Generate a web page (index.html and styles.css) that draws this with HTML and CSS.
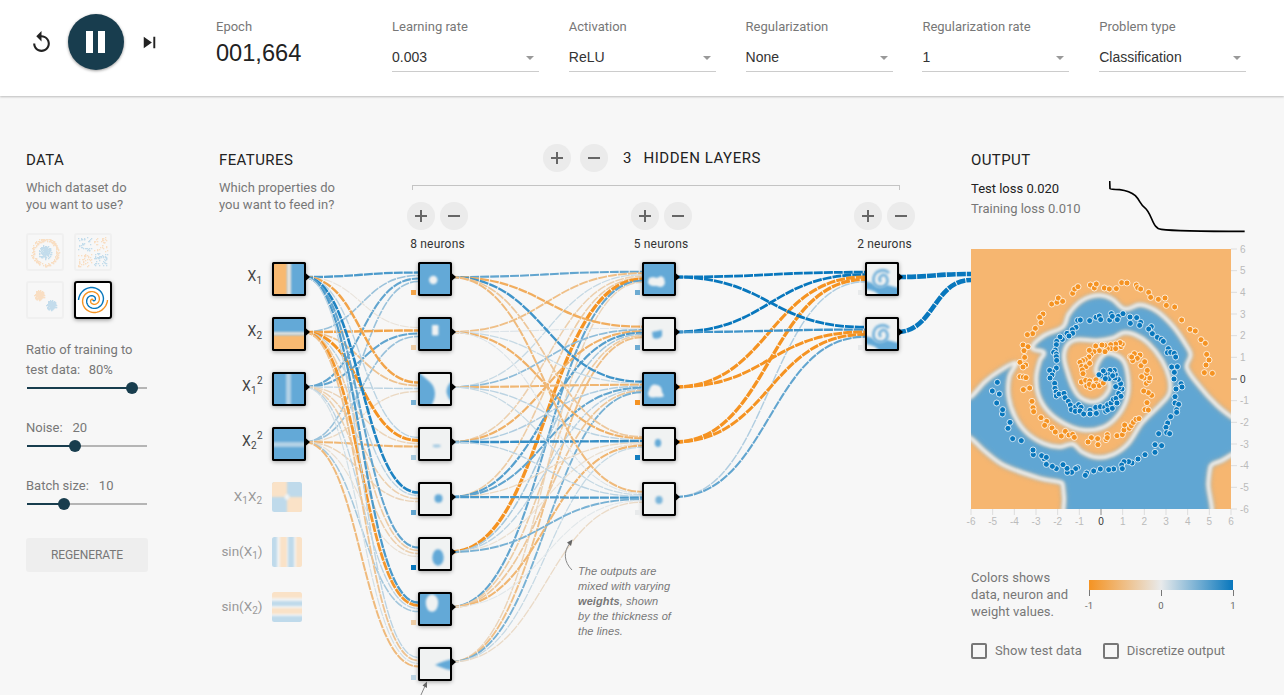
FILE: index.html
```html
<!DOCTYPE html>
<html lang="en">
<head>
<meta charset="utf-8">
<title>Neural Network Playground</title>
<link rel="stylesheet" href="styles.css">
</head>
<body>
<header class="topbar">
  <div class="controls">
    <svg class="reset" viewBox="0 0 24 24"><path d="M12 5V1L7 6l5 5V7c3.300 0 6 2.700 6 6s-2.700 6-6 6-6-2.700-6-6H4c0 4.400 3.600 8 8 8s8-3.600 8-8-3.600-8-8-8z"/></svg>
    <button class="play" aria-label="Pause"><svg viewBox="0 0 56 56"><path d="M18 17h7v22h-7zM30 17h7v22h-7z"/></svg></button>
    <svg class="step" viewBox="0 0 24 24"><path d="M6 18l8.500-6L6 6v12zM16 6v12h2V6h-2z"/></svg>
  </div>
  <div class="epoch"><div class="label">Epoch</div><div class="count">001,664</div></div>
  <div class="selects">
    <div class="field"><div class="label">Learning rate</div><div class="select">0.003</div></div>
    <div class="field"><div class="label">Activation</div><div class="select">ReLU</div></div>
    <div class="field"><div class="label">Regularization</div><div class="select">None</div></div>
    <div class="field"><div class="label">Regularization rate</div><div class="select">1</div></div>
    <div class="field"><div class="label">Problem type</div><div class="select">Classification</div></div>
  </div>
</header>
<main class="main">
  <section class="data">
    <h2>DATA</h2>
    <p class="intro">Which dataset do<br>you want to use?</p>
    <div class="datasets">
      <svg class="thumb" id="ds-circle" viewBox="0 0 34 34"></svg>
      <svg class="thumb" id="ds-xor" viewBox="0 0 34 34"></svg>
      <svg class="thumb" id="ds-gauss" viewBox="0 0 34 34"></svg>
      <svg class="thumb selected" id="ds-spiral" viewBox="0 0 34 34"></svg>
    </div>
    <div class="slider ratio"><div>Ratio of training to<br>test data:&nbsp; <span>80%</span></div><div class="track"><i style="width:105px"></i><b></b></div></div>
    <div class="slider"><div>Noise:&nbsp; <span>20</span></div><div class="track"><i style="width:48px"></i><b></b></div></div>
    <div class="slider"><div>Batch size:&nbsp; <span>10</span></div><div class="track"><i style="width:37px"></i><b></b></div></div>
    <button class="regenerate">REGENERATE</button>
  </section>
  <section class="network">
    <div class="network-head">
      <div class="features">
        <h2>FEATURES</h2>
        <p class="intro">Which properties do<br>you want to feed in?</p>
      </div>
      <div class="hidden">
        <div class="layers-title"><span class="round plus"></span><span class="round"></span><span class="num">3</span><span class="name">HIDDEN LAYERS</span></div>
        <div class="bracket"></div>
        <div class="layer-controls">
          <div class="layer"><div class="pair"><span class="round plus"></span><span class="round"></span></div><div class="neurons">8 neurons</div></div>
          <div class="layer"><div class="pair"><span class="round plus"></span><span class="round"></span></div><div class="neurons">5 neurons</div></div>
          <div class="layer"><div class="pair"><span class="round plus"></span><span class="round"></span></div><div class="neurons">2 neurons</div></div>
        </div>
      </div>
    </div>
    <svg class="diagram" id="diagram" viewBox="219 256 752 439">
      <defs>
        <filter id="soft" x="-50%" y="-50%" width="200%" height="200%"><feGaussianBlur stdDeviation="1.3"/></filter>
        <filter id="faint" x="-30%" y="-30%" width="160%" height="160%"><feGaussianBlur stdDeviation=".9"/></filter>
        <clipPath id="cell"><rect width="30" height="30"/></clipPath>
        <clipPath id="round-cell"><rect width="30" height="30" rx="2.500"/></clipPath>
      </defs>
      <g id="links"></g>
      <g id="nodes"></g>
      <g class="feature-label" text-anchor="end">
        <text x="262" y="280.500">X<tspan class="sub" dy="3">1</tspan></text>
        <text x="262" y="335.500">X<tspan class="sub" dy="3">2</tspan></text>
        <text x="256.500" y="391">X<tspan class="sub" dy="3">1</tspan></text><text class="sup" x="262.500" y="384">2</text>
        <text x="256.500" y="446">X<tspan class="sub" dy="3">2</tspan></text><text class="sup" x="262.500" y="439">2</text>
        <g class="off">
          <text x="262" y="500.500">X<tspan class="sub" dy="3">1</tspan><tspan dy="-3">X</tspan><tspan class="sub" dy="3">2</tspan></text>
          <text x="262.500" y="555.500">sin(X<tspan class="sub" dy="3">1</tspan><tspan dy="-3">)</tspan></text>
          <text x="262.500" y="610.500">sin(X<tspan class="sub" dy="3">2</tspan><tspan dy="-3">)</tspan></text>
        </g>
      </g>
      <g class="note">
        <path class="arrow" d="M572 570C564 562 563 552 570 543"/><path class="head" d="M572.500 539.500L571 546L567 542.500Z"/>
        <path class="arrow" d="M420.500 696L425 686"/><path class="head" d="M427 681.500L427 688L422.500 685.500Z"/>
        <text x="578" y="575">The outputs are</text>
        <text x="578" y="590">mixed with varying</text>
        <text x="578" y="605"><tspan font-weight="bold">weights</tspan>, shown</text>
        <text x="578" y="620">by the thickness of</text>
        <text x="578" y="635">the lines.</text>
      </g>
    </svg>
  </section>
  <section class="output">
    <h2>OUTPUT</h2>
    <div class="metrics">
      <div class="losses"><div class="test">Test loss <span>0.020</span></div><div class="training">Training loss <span>0.010</span></div></div>
      <svg class="loss-chart" viewBox="448 120 411 159"><path d="M450 123L451 146Q452 148 480 149Q510 153 527 167C540 180 542 193 555 203C578 221 578 268 605 268Q650 274 855 274"/></svg>
    </div>
    <svg class="plot" id="plot" viewBox="0 0 290 290">
      <defs>
        <clipPath id="plot-area"><rect width="260" height="260"/></clipPath>
        <filter id="edge" x="-10%" y="-10%" width="120%" height="120%"><feGaussianBlur stdDeviation="9"/></filter>
        <filter id="rim" x="-10%" y="-10%" width="120%" height="120%"><feGaussianBlur stdDeviation="5.500"/></filter>
      </defs>
      <rect width="260" height="260" fill="#f6b670"/>
      <g clip-path="url(#plot-area)"><g transform="translate(-11 -109) scale(.33333)">
        <path id="field" fill="#60a6d3" filter="url(#edge)"/>
        <path id="field-rim" fill="none" stroke="#eeeeec" stroke-width="12" filter="url(#rim)"/>
      </g></g>
      <g id="dots"></g>
      <g id="axes"></g>
    </svg>
    <div class="legend">
      <p>Colors shows<br>data, neuron and<br>weight values.</p>
      <svg viewBox="0 0 160 40">
        <defs><linearGradient id="scale"><stop stop-color="#f59322"/><stop offset=".5" stop-color="#e8eaeb"/><stop offset="1" stop-color="#0877bd"/></linearGradient></defs>
        <rect x="8" y="7" width="144" height="10" fill="url(#scale)"/>
        <path d="M8.500 17v6M80.500 17v6M152.500 17v6" stroke="#777"/>
        <text x="8" y="36">-1</text><text x="80" y="36">0</text><text x="152" y="36">1</text>
      </svg>
    </div>
    <div class="checks"><label><i></i>Show test data</label><label><i></i>Discretize output</label></div>
  </section>
</main>
<script src="app.js"></script>
</body>
</html>
```
FILE: styles.css
```css
* { box-sizing: border-box; }
body { margin: 0; height: 695px; overflow: hidden; background: #f7f7f7; color: #777; font: 13px/17px Roboto, sans-serif; }
h2, p { margin: 0; font-weight: 400; }
button { border: 0; padding: 0; font: inherit; }
svg { display: block; }
filter { color-interpolation-filters: sRGB; }

.topbar { display: flex; height: 96px; background: #fff; box-shadow: 0 1px 2px rgba(0, 0, 0, .24); }
.controls { display: flex; align-items: center; width: 216px; height: 84px; padding-left: 29px; }
.reset { width: 25px; height: 25px; fill: #222; }
.play { width: 56px; height: 56px; margin: 0 14px; border-radius: 50%; background: #183d4e; fill: #fff; box-shadow: 0 1px 3px rgba(0, 0, 0, .4); }
.step { width: 23px; height: 23px; fill: #222; }
.epoch { width: 176px; padding-top: 18px; }
.count { color: #222; font-family: "Liberation Sans", sans-serif; font-size: 23.600px; line-height: 34px; }
.label { line-height: 18px; }
.selects { display: flex; gap: 29.800px; padding-top: 18px; }
.field { width: 147px; }
.select { position: relative; height: 36px; border-bottom: 1px solid #ccc; color: #333; font-family: "Liberation Sans", sans-serif; font-size: 14px; line-height: 43px; }
.select::after { content: ""; position: absolute; right: 5px; top: 20px; border: 4px solid transparent; border-top-color: #999; border-bottom: 0; }

.main { display: flex; padding-top: 54px; }
h2 { height: 29px; color: #222; font-size: 15px; line-height: 20px; letter-spacing: .4px; }
.data { width: 219px; padding-left: 26px; }
.intro { height: 54px; }
.datasets { display: grid; grid-template-columns: 38px 38px; gap: 10px; }
.thumb { width: 38px; height: 38px; border: 2px solid #f0f0f0; border-radius: 3px; }
.selected { border-color: #000; background: #fff; box-shadow: 0 1px 4px rgba(0, 0, 0, .4); }
.slider { height: 58px; padding-top: 21px; line-height: 20px; }
.slider span { margin-left: 2px; }
.slider:not(.ratio) span { margin-left: 3.500px; }
.ratio { height: 78px; }
.track { display: flex; align-items: center; width: 120px; height: 18px; margin: -1px 0 0 1px; background: linear-gradient(#b5b5b5, #b5b5b5) 0 8px / 100% 2px no-repeat; }
.track i { height: 2px; background: #183d4e; }
.track b { width: 12px; height: 12px; margin-left: -6px; border-radius: 50%; background: #183d4e; }
.regenerate { width: 122px; height: 34px; margin-top: 25px; border-radius: 3px; background: #eee; color: #777; font-size: 12px; letter-spacing: -.1px; }

.network { width: 752px; }
.network-head { display: flex; height: 106px; }
.features { width: 188px; }
.hidden { width: 508px; margin-top: -6px; }
.layers-title { display: flex; align-items: center; height: 28px; padding-left: 136px; color: #222; font-size: 15px; }
.layers-title .round + .round { margin-left: 9px; }
.num { margin-left: 15px; }
.name { margin-left: 12px; letter-spacing: .55px; }
.round { display: block; width: 28px; height: 28px; border-radius: 50%; background: linear-gradient(#666, #666) center / 12px 2px no-repeat, #ebebeb; }
.round.plus { background: linear-gradient(#666, #666) center / 12px 2px no-repeat, linear-gradient(#666, #666) center / 2px 12px no-repeat, #ebebeb; }
.bracket { width: 488px; height: 5px; margin: 13px 0 12px 5px; border: 1px solid #c4c4c4; border-bottom: 0; }
.layer-controls { display: flex; justify-content: space-between; }
.layer { width: 61px; }
.pair { display: flex; gap: 5px; }
.neurons { height: 28px; color: #333; font-size: 12px; line-height: 28px; letter-spacing: .2px; text-align: center; white-space: nowrap; }
.diagram { width: 752px; height: 439px; }
.feature-label text { fill: #444; font-size: 14px; }
.feature-label .sub, .feature-label .sup { font-size: 10px; }
.feature-label .off text { fill: #999; font-size: 13.500px; }
.links-group path { fill: none; stroke-dasharray: 9 1; }
.box { fill: none; stroke: #000; stroke-width: 2; }
.shade { filter: drop-shadow(0 1px 2px rgba(0, 0, 0, .35)); }
.note text { fill: #777; font: italic 11px "Liberation Sans", sans-serif; letter-spacing: .1px; }
.arrow { fill: none; stroke: #888; }
.head { fill: #666; }

.output { width: 313px; }
.metrics { display: flex; height: 70px; color: #222; }
.losses { width: 138px; line-height: 20px; }
.test { color: #222; }
.training { color: #777; white-space: nowrap; }
.loss-chart { width: 137px; height: 53px; margin-top: 1px; fill: none; stroke: #000; stroke-width: 5; }
.plot { width: 290px; height: 290px; overflow: visible; }
.plot text { font: 10px "Liberation Sans", sans-serif; fill: #bbb; }
.plot .zero { fill: #333; }
.legend { display: flex; height: 74px; margin-top: 29px; padding-top: 1px; }
.legend p { width: 110px; white-space: nowrap; letter-spacing: .05px; }
.legend svg { width: 160px; height: 40px; margin-top: 4px; }
.legend text { fill: #666; font-size: 9.500px; text-anchor: middle; }
.checks { display: flex; gap: 21px; }
.checks label { display: flex; align-items: center; gap: 8px; white-space: nowrap; letter-spacing: .03px; }
.checks i { width: 16px; height: 16px; border: 2px solid #777; border-radius: 2px; }
```
FILE: app.js
```js
const $ = id => document.getElementById(id);

function color(w) {
  const zero = [232, 234, 235], end = w < 0 ? [245, 147, 34] : [8, 119, 189];
  const t = Math.min(1, Math.abs(w));
  return "rgb(" + zero.map((c, i) => Math.round(c + (end[i] - c) * t)) + ")";
}

/* Network: rows are destination neurons, columns are their inputs. */
const layerX = [272, 418, 642, 865];
const weights = [
  [[.7, .35, .6, .35], [-.08, -.8, .6, .35], [-.8, -.45, .2, -.2], [.2, -1.1, -.25, -.6],
   [.9, .2, -.3, -.25], [.6, -.35, -.3, -.12], [.7, -.95, .2, .3], [.2, -.45, .1, -.55]],
  [[.6, -.5, .15, -.3, -.35, -1.3, .6, -.25], [-.7, .05, .4, -.65, .65, .3, -.35, -.5],
   [.75, .15, -.6, .25, .6, .2, -.4, .5], [-.4, -.65, .2, .8, -.2, -.12, -.6, .15],
   [-.55, .06, .15, .2, .7, .5, .03, -.18]],
  [[1, 1, -1.2, -1.3, .25], [1, .75, -1.1, -1.1, .6]]
];
let links = "";
const link = (x0, y0, x1, y1, w) => {
  const m = (x0 + x1) / 2;
  links += `<path d="M${x0} ${y0}C${m} ${y0} ${m} ${y1} ${x1} ${y1}" stroke="${color(w)}" stroke-width="${1 + 1.8 * Math.abs(w)}"/>`;
};
weights.forEach((layer, l) => layer.forEach((row, j) => row.forEach((w, i) =>
  link(layerX[l] + 32, 277 + 55 * i, layerX[l + 1], 277 + 55 * j + (i - (row.length - 1) / 2) / row.length * 12, w))));
link(897, 277, 971, 274, 2);
link(897, 332, 971, 280, 2);
$("links").innerHTML = links;
$("links").setAttribute("class", "links-group");

const B = "#63a9d7", W = "#f0f2f2", O = "#f8b971";
const bg = c => `<rect width="30" height="30" fill="${c}"/>`;
const blob = (x, y, rx, ry, c) => `<ellipse cx="${x}" cy="${y}" rx="${rx}" ry="${ry}" fill="${c}" filter="url(#soft)"/>`;
const shape = (d, c) => `<path d="${d}" fill="${c}" filter="url(#soft)"/>`;
const whorl = bg(W) +
  `<path d="M-6 17Q4 17 7 21Q12 26 20 21L36 25V36H14Q12 25-6 25Z" fill="${B}" filter="url(#soft)"/>` +
  `<path d="M14 18q-3-3 0-6q4-3 6 2q2 5-3 8q-7 2-10-3q-2-7 3-11q7-4 12 1" fill="none" stroke="${B}" stroke-width="2.800" opacity=".85" filter="url(#faint)"/>`;
const art = [
  [bg(B) + shape("M-4-4H13.500V34H-4Z", O) + shape("M13-4h4v38h-4z", "#e9e4dc"),
   bg(B) + shape("M-4 16H34V34H-4Z", O) + shape("M-4 13h38v3h-38z", "#e9e4dc"),
   bg(B) + shape("M12-4h5v38h-5z", "#b3d2e6"),
   bg(B) + shape("M-4 13h38v5h-38z", "#b3d2e6")],
  [bg(B) + blob(13.3, 16, 4.2, 4.2, W), bg(B) + `<rect x="12" y="6" width="6.500" height="10.500" rx="1" fill="${W}" filter="url(#soft)"/>`,
   bg(W) + shape("M-4-4L10 8Q20 18 10 34H-4Z", B) + shape("M34 5Q19 17 34 30Z", B),
   bg(W) + blob(16.7, 17, 4, 1.4, "#9dc6e0"), bg(W) + blob(18.5, 14.5, 4, 4.2, B), bg(W) + blob(18, 18.5, 5.7, 8.2, B),
   bg(B) + blob(12, 9, 6.2, 8.7, W), bg(W) + shape("M15 16Q25 11 34 10V22Q24 20 15 16Z", B)],
  [bg(B) + shape("M5 14L9 13L13 14L17 12L20 14L21 19Q19 25 13 22L9 22Q4 21 4 18Z", W), bg(W) + shape("M8 13L18 11V17Q15 21 9 19Z", B),
   bg(B) + shape("M6 14Q8 9 13 11Q18 12 18 18L20 22Q18 24 12 23Q4 25 4 19Z", W), bg(W) + blob(14, 14, 3.2, 4, B), bg(W) + blob(15, 16, 3.6, 4, "#78b4da")],
  [whorl, whorl]
];
const bias = [[], [-.8, -.35, .5, .3, .6, 1, -.35, .2], [.55, .55, -1, .95, 0], [0, 0]];
let nodes = "";
art.forEach((column, l) => column.forEach((cell, i) => {
  const x = layerX[l], y = 262 + 55 * i;
  nodes += `<g transform="translate(${x} ${y})"><rect class="shade" width="34" height="34" rx="2"/><g transform="translate(2 2)" clip-path="url(#cell)">${cell}</g>` +
    `<rect class="box" x="1" y="1" width="32" height="32" rx="1.500"/><path d="M33.500 11L38 15L33.500 19Z"/></g>`;
  if (l) nodes += `<rect x="${x - 7}" y="${y + 28}" width="5" height="5" fill="${color(bias[l][i])}"/>`;
}));
const lb = "#bfdaeb", lo = "#fae2c7";
const bars = c => c.map(([p, s, f]) => `<rect x="${p}" y="-4" width="${s}" height="38" fill="${f}" filter="url(#soft)"/>`).join("");
const off = [
  bg(lb) + shape("M-3-3H15V15H-3ZM15 15H33V33H15Z", lo) + blob(15, 15, 2.5, 3, W),
  bg("#f2f3f3") + bars([[-3, 8, lb], [8, 7, lo], [16, 6, lb], [24, 9, lo]]),
  bg("#f2f3f3") + `<g transform="matrix(0 1 1 0 0 0)">${bars([[-3, 9, lo], [9, 5, lb], [16, 6, lo], [24, 9, lb]])}</g>`
];
off.forEach((c, i) => nodes += `<g transform="translate(272 ${482 + 55 * i})" clip-path="url(#round-cell)">${c}</g>`);
$("nodes").innerHTML = nodes;

/* Decision boundary, in a grid of a third of a pixel. */
const outline = [[-20,800],[33,770],[75,725],[120,692],[168,668],[148,710],[146,770],[165,830],[200,878],[250,910],[300,921],[338,912],[365,935],[410,952],[460,943],[505,910],[545,850],[600,795],[628,760],[628,715],[605,660],[565,610],[525,584],[490,578],[460,594],[410,602],[350,599],[322,615],[312,650],[322,695],[338,740],[358,770],[390,785],[420,780],[446,752],[448,728],[430,708],[408,696],[414,668],[435,642],[460,642],[490,662],[504,710],[502,770],[475,825],[430,862],[370,870],[315,852],[265,815],[235,765],[229,710],[240,660],[252,637],[216,624],[250,588],[310,560],[326,522],[365,482],[415,466],[455,476],[495,507],[540,494],[590,513],[640,560],[680,618],[692,645],[680,682],[720,740],[770,795],[813,830],[860,860],[860,915],[813,945],[785,962],[755,974],[749,992],[745,1030],[738,1150],[325,1150],[312,1070],[309,1040],[305,1028],[240,1015],[130,975],[70,930],[33,895],[-20,860]];
let d = "M" + outline[0];
for (let i = 0; i < outline.length; i++) {
  const p = k => outline[(i + k + outline.length) % outline.length];
  const a = p(-1), b = p(0), c = p(1), e = p(2);
  const len = Math.hypot(c[0] - b[0], c[1] - b[1]) / 3;
  const h0 = Math.hypot(c[0] - a[0], c[1] - a[1]) || 1, h1 = Math.hypot(e[0] - b[0], e[1] - b[1]) || 1;
  const k0 = Math.min(len, h0 / 5) / h0, k1 = Math.min(len, h1 / 5) / h1;
  d += `C${b[0] + (c[0] - a[0]) * k0} ${b[1] + (c[1] - a[1]) * k0} ${c[0] - (e[0] - b[0]) * k1} ${c[1] - (e[1] - b[1]) * k1} ${c[0]} ${c[1]}`;
}
$("field").setAttribute("d", d + "Z");
$("field-rim").setAttribute("d", d + "Z");

const orange = "275,492 291,487 295,474 308,484 338,460 344,447 354,440 391,435 403,444 409,432 433,444 448,447 469,446 485,428 501,429 529,435 533,443 542,447 566,457 572,472 595,478 615,474 619,496 644,501 665,540 690,568 706,573 723,599 736,610 740,643 747,660 738,675 733,698 757,700 249,522 239,532 243,548 226,565 218,581 202,584 189,615 204,620 192,632 194,652 180,667 197,675 189,681 180,710 190,711 198,713 190,749 209,744 216,784 219,803 221,815 243,833 260,844 254,856 276,864 286,876 304,888 316,874 327,885 338,883 343,892 394,893 384,906 413,896 414,914 438,899 442,884 442,893 471,887 487,884 492,870 494,855 508,865 514,857 520,847 528,838 537,836 555,809 565,810 561,788 575,766 565,758 551,753 559,730 567,722 569,714 552,714 545,710 560,700 562,691 543,677 554,665 540,645 532,655 523,641 511,650 518,662 515,651 483,620 487,612 480,608 467,612 452,614 453,626 467,626 442,626 435,635 434,616 426,615 418,632 407,618 402,635 393,643 388,631 387,651 376,659 368,662 360,667 365,679 378,680 389,670 367,690 369,701 364,726 377,721 380,738 391,743 398,735 408,719 410,732 418,737 430,729 389,723 388,733 401,738";
const blue = "353,541 361,540 389,542 408,532 418,528 422,539 449,540 454,521 457,529 475,529 472,539 489,521 510,531 511,550 530,533 542,547 539,556 574,560 566,567 577,581 592,592 604,598 610,604 625,626 622,638 632,637 643,640 647,651 635,681 652,680 643,697 642,717 663,731 666,741 648,747 645,770 645,789 656,793 650,809 650,817 632,830 623,849 618,862 620,878 629,881 596,881 585,914 605,917 585,937 555,944 534,957 516,969 506,965 492,965 485,975 487,986 461,987 446,989 421,987 401,993 380,999 376,1006 353,983 347,986 335,997 322,997 321,985 309,974 289,986 277,979 259,973 252,956 245,947 259,952 220,944 219,930 184,902 158,896 144,865 150,847 127,822 128,809 110,789 118,762 97,753 112,727 348,562 337,569 338,580 321,580 327,588 307,598 300,591 290,604 289,614 286,630 281,637 289,642 289,650 290,661 289,684 278,695 269,691 276,705 270,714 284,730 285,745 288,756 289,768 297,762 312,760 315,773 325,784 331,795 334,809 347,801 346,814 356,794 363,802 360,813 371,822 390,811 390,822 407,802 409,820 421,800 434,802 437,814 443,794 443,810 453,789 457,805 460,778 468,775 471,789 476,760 483,769 486,747 477,742 467,740 482,731 475,718 465,714 466,703 463,691 456,699 450,691 445,704 435,701 430,693 423,708 417,704 447,716 458,707 436,716";
const plotDots = (s, c) => s.split(" ").map(p => {
  const [x, y] = p.split(",");
  return `<circle cx="${(x - 33) / 3}" cy="${(y - 327) / 3}" r="3" fill="${c}" stroke="#fff" stroke-width=".9" stroke-opacity=".85"/>`;
}).join("");
$("dots").innerHTML = plotDots(orange, "#f59322") + plotDots(blue, "#0877bd");

let axes = "";
for (let v = -6; v <= 6; v++) {
  const p = (v + 6) * 260 / 12, q = 260 - p, cls = v ? "" : "zero", s = v ? "#ddd" : "#888";
  axes += `<path d="M${p} 260v6M260 ${q}h6" stroke="${s}"/><text class="${cls}" text-anchor="middle" x="${p}" y="276">${v}</text><text class="${cls}" x="269" y="${q + 3.5}">${v}</text>`;
}
$("axes").innerHTML = axes;

/* Dataset thumbnails */
let seed = 7;
const rnd = () => (seed = (seed * 16807) % 2147483647) / 2147483647;
const px = (x, y, c) => `<rect x="${Math.round(x)}" y="${Math.round(y)}" width="1.300" height="1.300" fill="${c}"/>`;
let circle = "", xor = "", gauss = "";
for (let i = 0; i < 190; i++) {
  const a = rnd() * 6.283, r = rnd() * 7, q = 11 + rnd() * 3;
  circle += px(17 + r * Math.cos(a), 17 + r * Math.sin(a), "#c3dcec") + px(17 + q * Math.cos(a), 17 + q * Math.sin(a), "#f9dfc3");
  const x = 2 + rnd() * 29, y = 2 + rnd() * 29;
  if (Math.abs(x - 17) > 1 && Math.abs(y - 17) > 1) xor += px(x, y, (x < 17) === (y < 17) ? "#c3dcec" : "#f9dfc3");
  const g = rnd() * 5;
  gauss += px(11 + g * Math.cos(a), 12 + g * Math.sin(a), "#f9dfc3") + px(23 + g * Math.cos(a), 22 + g * Math.sin(a), "#c3dcec");
}
$("ds-circle").innerHTML = circle;
$("ds-xor").innerHTML = xor;
$("ds-gauss").innerHTML = gauss;
const arm = flip => {
  let s = "";
  for (let i = 0; i <= 80; i++) {
    const t = i / 80, r = 14.5 * t * flip, a = 1.75 * t * 6.283;
    s += (i ? "L" : "M") + (17 + r * Math.sin(a)) + " " + (17 + r * Math.cos(a));
  }
  return s;
};
$("ds-spiral").innerHTML = `<path d="${arm(1)}" fill="none" stroke="#0877bd" stroke-width="1.400"/><path d="${arm(-1)}" fill="none" stroke="#f59322" stroke-width="1.400"/>`;
```
